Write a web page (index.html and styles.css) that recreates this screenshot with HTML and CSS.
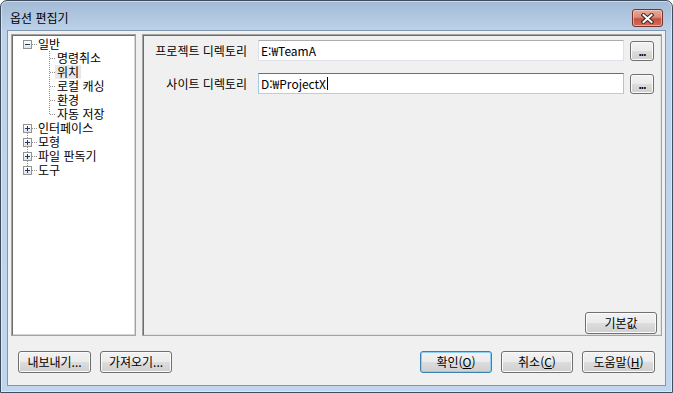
FILE: index.html
```html
<!DOCTYPE html>
<html lang="ko">
<head>
<meta charset="utf-8">
<title>옵션 편집기</title>
<link rel="stylesheet" href="styles.css">
</head>
<body>
<div class="window">
  <div class="titlebar">
    <span class="title">옵션 편집기</span>
    <button class="close" aria-label="닫기">
      <svg width="13" height="11" viewBox="0 0 13 11">
        <path d="M2.5 2 L10.5 9 M10.5 2 L2.5 9" stroke="#3b2622" stroke-width="4" stroke-linecap="square"/>
        <path d="M2.5 2 L10.5 9 M10.5 2 L2.5 9" stroke="#ffffff" stroke-width="2" stroke-linecap="square"/>
      </svg>
    </button>
  </div>
  <div class="client">
    <div class="main">
      <div class="tree">
        <div class="tree-body">
          <div class="node root"><span class="exp minus"></span><span class="lbl">일반</span></div>
          <div class="children">
            <div class="node child"><span class="lbl">명령취소</span></div>
            <div class="node child"><span class="lbl sel">위치</span></div>
            <div class="node child"><span class="lbl">로컬 캐싱</span></div>
            <div class="node child"><span class="lbl">환경</span></div>
            <div class="node child"><span class="lbl">자동 저장</span></div>
          </div>
          <div class="roots">
            <div class="node root"><span class="exp plus"></span><span class="lbl">인터페이스</span></div>
            <div class="node root"><span class="exp plus"></span><span class="lbl">모형</span></div>
            <div class="node root"><span class="exp plus"></span><span class="lbl">파일 판독기</span></div>
            <div class="node root"><span class="exp plus"></span><span class="lbl">도구</span></div>
          </div>
        </div>
      </div>
      <div class="panel">
        <div class="fields">
          <label class="flabel">프로젝트 디렉토리</label>
          <div class="input">E:₩TeamA</div>
          <button class="btn dots">...</button>
          <label class="flabel">사이트 디렉토리</label>
          <div class="input focus">D:₩ProjectX<span class="caret"></span></div>
          <button class="btn dots">...</button>
        </div>
        <div class="panel-foot">
          <button class="btn wide">기본값</button>
        </div>
      </div>
    </div>
    <div class="footer">
      <div class="group">
        <button class="btn wide w73">내보내기...</button>
        <button class="btn wide">가져오기...</button>
      </div>
      <div class="group">
        <button class="btn wide default">확인(<u>O</u>)</button>
        <button class="btn wide">취소(<u>C</u>)</button>
        <button class="btn wide w73">도움말(<u>H</u>)</button>
      </div>
    </div>
  </div>
</div>
</body>
</html>
```

FILE: styles.css
```css
* { box-sizing: border-box; }
html, body { margin: 0; padding: 0; background: #ffffff; }
body {
  font-family: "Noto Sans CJK KR", "Noto Sans", sans-serif;
  font-size: 12px;
  color: #000;
}
.window {
  width: 673px;
  height: 393px;
  border: 1px solid #3f4d5e;
  border-radius: 7px 7px 0 0;
  background: linear-gradient(#a3bad5 0px, #b4cae3 20px, #bdd3eb 32px, #c0d6ee 100%);
  box-shadow: inset 0 0 0 1px rgba(255,255,255,0.45);
  display: flex;
  flex-direction: column;
  overflow: hidden;
}
.titlebar {
  height: 29px;
  display: flex;
  justify-content: space-between;
  align-items: flex-start;
  padding-left: 9px;
  padding-right: 9px;
}
.title {
  padding-top: 9px;
  line-height: 16px;
  color: #000;
}
.close {
  margin-top: 8px;
  width: 31px;
  height: 18px;
  padding: 0;
  border: 1px solid #7a3228;
  border-radius: 3px;
  background: linear-gradient(#e9aa98 0%, #d88b79 45%, #c4543f 55%, #d06d5c 100%);
  box-shadow: inset 0 0 0 1px rgba(255,220,210,0.55);
  display: flex;
  align-items: center;
  justify-content: center;
}
.close svg { display: block; }
.client {
  flex: 1;
  margin: 0 6px 6px 6px;
  border: 1px solid #8197b0;
  background: #f0f0f0;
  padding: 3px 10px 0 3px;
  display: flex;
  flex-direction: column;
}
.main {
  height: 302px;
  display: flex;
  gap: 6px;
  margin-right: -7px;
}
.tree {
  width: 125px;
  background: #fff;
  border: 1px solid #a3a3a3;
  box-shadow: inset 1px 1px 0 #6e6e6e, inset -1px -1px 0 #d5d5d5;
}
.tree-body {
  padding: 2px 0 0 11px;
}
.node {
  height: 14px;
  display: flex;
  align-items: center;
  position: relative;
  white-space: nowrap;
  line-height: 14px;
}
.exp {
  width: 9px;
  height: 9px;
  border: 1px solid #939393;
  background: linear-gradient(#ffffff, #e4e4e4);
  position: relative;
  margin-right: 6px;
  z-index: 1;
  flex: none;
}
.exp::before {
  content: "";
  position: absolute;
  left: 1px;
  top: 3px;
  width: 5px;
  height: 1px;
  background: #1f3a70;
}
.exp.plus::after {
  content: "";
  position: absolute;
  left: 3px;
  top: 1px;
  width: 1px;
  height: 5px;
  background: #1f3a70;
}
.root::after {
  content: "";
  position: absolute;
  left: 9px;
  top: 7px;
  width: 5px;
  border-top: 1px dotted #8e8e8e;
}
.lbl { padding: 0 2px 0 0; }
.children { position: relative; }
.children::before {
  content: "";
  position: absolute;
  left: 26px;
  top: 0;
  bottom: 7px;
  border-left: 1px dotted #8e8e8e;
}
.child { padding-left: 32px; }
.child::before {
  content: "";
  position: absolute;
  left: 27px;
  top: 7px;
  width: 5px;
  border-top: 1px dotted #8e8e8e;
}
.child .lbl { padding: 0 2px; height: 14px; }
.child .lbl.sel { background: #e8e8e8; }
.roots { position: relative; }
.roots::before {
  content: "";
  position: absolute;
  left: 4px;
  top: 7px;
  bottom: 7px;
  border-left: 1px dotted #8e8e8e;
}
.panel {
  width: 520px;
  border: 1px solid #a3a3a3;
  box-shadow: inset 1px 1px 0 #6e6e6e, inset -1px -1px 0 #e2e2e2;
  background: #f0f0f0;
  padding: 5px 6px 1px 5px;
  display: flex;
  flex-direction: column;
}
.fields {
  display: grid;
  grid-template-columns: 104px 366px 24px;
  column-gap: 6px;
  row-gap: 12px;
  align-items: center;
}
.flabel {
  text-align: right;
  padding-right: 5px;
  white-space: nowrap;
  line-height: 16px;
}
.input {
  height: 21px;
  background: #fff;
  border: 1px solid #e2e3ea;
  border-top-color: #abadb3;
  border-left-color: #dbdfe6;
  border-right-color: #dbdfe6;
  padding: 0 2px;
  line-height: 19px;
  white-space: nowrap;
  display: flex;
  align-items: center;
}
.input.focus {
  border-color: #a4c9e3;
  border-top-color: #3d7bad;
  border-bottom-color: #b5cfe7;
}
.caret {
  display: inline-block;
  width: 1px;
  height: 13px;
  background: #000;
  margin-left: 1px;
}
.btn {
  font-family: "Noto Sans CJK KR", "Noto Sans", sans-serif;
  font-size: 12px;
  color: #000;
  border: 1px solid #707070;
  border-radius: 3px;
  background: linear-gradient(#f2f2f2 0%, #ebebeb 50%, #dddddd 51%, #cfcfcf 100%);
  box-shadow: inset 0 0 0 1px #fbfbfb;
  padding: 0;
  line-height: 18px;
  cursor: default;
}
.btn u { text-decoration: underline; text-underline-offset: 1px; }
.dots {
  width: 24px;
  height: 20px;
  line-height: 14px;
  padding-top: 2px;
  letter-spacing: -1px;
  font-weight: bold;
  font-size: 10px;
}
.panel-foot {
  margin-top: auto;
  display: flex;
  justify-content: flex-end;
  margin-right: -2px;
}
.wide {
  width: 72px;
  height: 22px;
}
.w73 { width: 73px; }
.default {
  border-color: #3c7fb1;
  box-shadow: inset 0 0 0 1px #8fd0f2;
}
.footer {
  margin-top: 15px;
  display: flex;
  justify-content: space-between;
  padding-left: 7px;
}
.group {
  display: flex;
  gap: 9px;
}
```
